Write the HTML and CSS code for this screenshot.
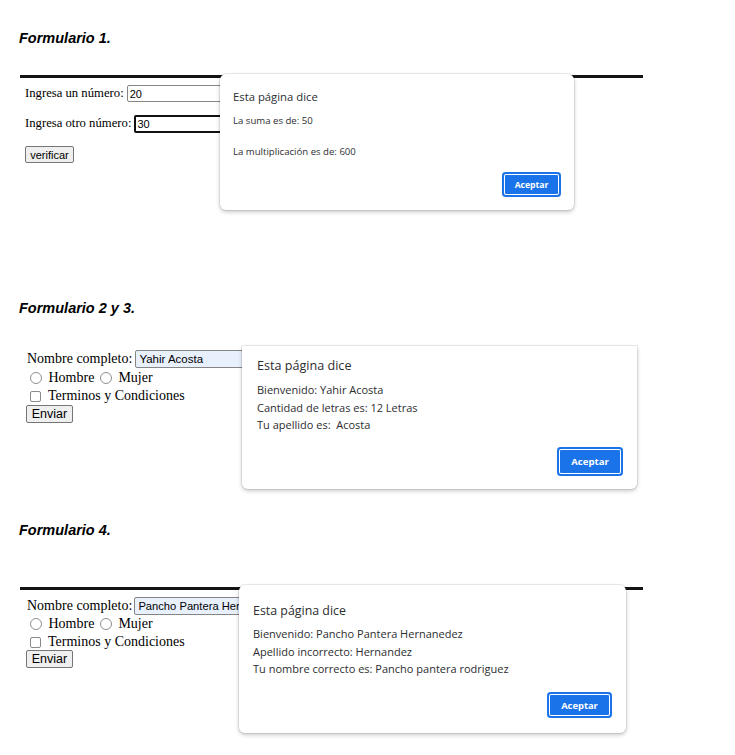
FILE: index.html
```html
<!DOCTYPE html>
<html lang="es">
<head>
<meta charset="utf-8">
<title>Formularios</title>
<link rel="stylesheet" href="styles.css">
</head>
<body>
<main class="doc">
  <section class="sec sec1">
    <h2 class="title">Formulario 1.</h2>
    <div class="shot shot-line shot1">
      <form class="f1">
        <div class="f1-row"><label>Ingresa un número:</label><input class="in1" type="text" value="20"></div>
        <div class="f1-row"><label>Ingresa otro número:</label><input class="in1 in-focus" type="text" value="30"></div>
        <button type="button" class="btn1">verificar</button>
      </form>
      <div class="dialog d1">
        <div class="d-title">Esta página dice</div>
        <div class="d-body">
          <p>La suma es de: 50</p>
          <p>&nbsp;</p>
          <p>La multiplicación es de: 600</p>
        </div>
        <div class="d-actions"><button type="button" class="d-btn">Aceptar</button></div>
      </div>
    </div>
  </section>

  <section class="sec sec2">
    <h2 class="title">Formulario 2 y 3.</h2>
    <div class="shot shot2">
      <form class="f2">
        <div class="f2-row"><label>Nombre completo:</label><input class="in2" type="text" value="Yahir Acosta"></div>
        <div class="f2-row"><input class="radio r1" type="radio" name="g1"><span>Hombre</span><input class="radio r2" type="radio" name="g1"><span>Mujer</span></div>
        <div class="f2-row"><input class="check" type="checkbox"><span>Terminos y Condiciones</span></div>
        <button type="button" class="btn2">Enviar</button>
      </form>
      <div class="dialog d2">
        <div class="d-title">Esta página dice</div>
        <div class="d-body">
          <p>Bienvenido: Yahir Acosta</p>
          <p>Cantidad de letras es: 12 Letras</p>
          <p>Tu apellido es:&nbsp; Acosta</p>
        </div>
        <div class="d-actions"><button type="button" class="d-btn">Aceptar</button></div>
      </div>
    </div>
  </section>

  <section class="sec sec3">
    <h2 class="title">Formulario 4.</h2>
    <div class="shot shot-line shot3">
      <form class="f2 f4">
        <div class="f2-row"><label>Nombre completo:</label><input class="in2 in2b" type="text" value="Pancho Pantera Hernanedez"></div>
        <div class="f2-row"><input class="radio r1" type="radio" name="g2"><span>Hombre</span><input class="radio r2" type="radio" name="g2"><span>Mujer</span></div>
        <div class="f2-row"><input class="check" type="checkbox"><span>Terminos y Condiciones</span></div>
        <button type="button" class="btn2">Enviar</button>
      </form>
      <div class="dialog d3">
        <div class="d-title">Esta página dice</div>
        <div class="d-body">
          <p>Bienvenido: Pancho Pantera Hernanedez</p>
          <p>Apellido incorrecto: Hernandez</p>
          <p>Tu nombre correcto es: Pancho pantera rodriguez</p>
        </div>
        <div class="d-actions"><button type="button" class="d-btn">Aceptar</button></div>
      </div>
    </div>
  </section>
</main>
</body>
</html>
```
FILE: styles.css
```css
* { box-sizing: border-box; }
body { margin: 0; background: #fff; color: #000; }
.doc { width: 735px; }

.title {
  margin: 0 0 0 19px;
  font: italic bold 14.5px/17px "Liberation Sans", Arial, sans-serif;
  color: #000;
}
.sec1 { padding-top: 30px; }
.sec2 { padding-top: 85px; }
.sec3 { padding-top: 31px; }

.shot { position: relative; margin-left: 20px; width: 623px; }
.shot-line { border-top: 3px solid #141414; }
.shot1 { margin-top: 28px; height: 140px; }
.shot2 { margin-top: 29px; height: 145px; }
.shot3 { margin-top: 48px; height: 160px; }

/* Formulario 1 */
.f1 {
  padding: 7px 0 0 5px;
  font: 12.7px "Liberation Serif", "Times New Roman", serif;
  display: flex; flex-direction: column; align-items: flex-start;
}
.f1-row { display: flex; align-items: center; gap: 3px; height: 17px; margin-bottom: 13px; }
.f1-row + .f1-row { margin-bottom: 14px; }
.in1 {
  width: 150px; height: 17px; margin: 0;
  border: 1px solid #858585; border-radius: 2px;
  padding: 0 2px; font: 11px "Liberation Sans", Arial, sans-serif; color: #000; background: #fff;
}
.in-focus { height: 18px; border: 2px solid #111; padding: 0 1px; }
.btn1 {
  width: 49px; height: 17px; padding: 0; margin: 0;
  font: 11px "Liberation Sans", Arial, sans-serif; color: #000;
  background: #efefef; border: 1px solid #767676; border-radius: 2px;
}

/* Formularios 2-4 */
.f2 {
  padding: 4px 0 0 6px;
  font: 14px/18px "Liberation Serif", "Times New Roman", serif;
  display: flex; flex-direction: column; align-items: flex-start;
}
.f2-row { display: flex; align-items: center; height: 18px; }
.f2-row + .f2-row { margin-top: 1px; }
.f2-row + .f2-row + .f2-row { margin-top: 0; }
.f2-row label { margin-left: 1px; }
.f4 { padding-top: 7px; }
.f4 .f2-row + .f2-row { margin-top: 0; }
.f4 .btn2 { margin-top: -1px; }
.in2 {
  width: 150px; height: 18px; margin: 0 0 0 3px;
  border: 1px solid #858585; border-radius: 2px;
  padding: 0 3px; font: 11.5px "Liberation Sans", Arial, sans-serif; color: #000; background: #e8f0fe;
}
.in2b { margin-left: 2px; font-size: 11.2px; }
.radio {
  appearance: none; -webkit-appearance: none;
  width: 12px; height: 12px; margin: 0 6.5px 0 4px;
  border: 1px solid #8f8f8f; border-radius: 50%; background: #fff;
}
.radio.r2 { margin-left: 5.5px; }
.check {
  appearance: none; -webkit-appearance: none;
  width: 11px; height: 11px; margin: 0 7px 0 4px;
  border: 1px solid #8a8a8a; border-radius: 2px; background: #fff;
}
.btn2 {
  width: 47px; height: 18px; padding: 0; margin: 0;
  font: 12.5px "Liberation Sans", Arial, sans-serif; color: #000;
  background: #efefef; border: 1px solid #767676; border-radius: 2px;
}

/* Dialogs */
.dialog {
  position: absolute;
  background: #fff;
  border-radius: 6px;
  box-shadow: 0 0 0 1px rgba(0,0,0,0.07), 0 2px 4px rgba(0,0,0,0.22);
  font-family: "Open Sans", "Noto Sans", sans-serif;
  color: #2d2e30;
  display: flex; flex-direction: column;
}
.d-body p { margin: 0; white-space: nowrap; }
.d-actions { display: flex; justify-content: flex-end; }
.d-btn {
  margin: 0; padding: 0;
  border: none; border-radius: 4px;
  background: #1a73e8; color: #fff;
  font-family: "Open Sans", "Noto Sans", sans-serif; font-weight: 700;
  box-shadow: inset 0 0 0 2px #1a73e8, inset 0 0 0 3px #fff;
}

.d1 { left: 200px; top: -4px; width: 354px; padding: 16px 13px 13px 13px; }
.d1 .d-title { font-size: 11.3px; line-height: 14px; }
.d1 .d-body { margin-top: 8.5px; font-size: 9.6px; line-height: 15.5px; }
.d1 .d-actions { margin-top: 13px; }
.d1 .d-btn { width: 59px; height: 25px; font-size: 8.6px; }

.d2 { left: 222px; top: 0; width: 395px; padding: 11.5px 14px 13px 15px; border-radius: 0 0 6px 6px; }
.d2 .d-title { font-size: 12.6px; line-height: 16px; }
.d2 .d-body { margin-top: 7.5px; font-size: 11px; line-height: 17.5px; }
.d2 .d-actions { margin-top: 13.5px; }
.d2 .d-btn { width: 66px; height: 29px; font-size: 9.6px; }

.d3 { left: 219px; top: -5px; width: 387px; padding: 18px 14px 15px 14px; }
.d3 .d-title { font-size: 12.4px; line-height: 16px; }
.d3 .d-body { margin-top: 6px; font-size: 11px; line-height: 17.5px; }
.d3 .d-actions { margin-top: 14.5px; }
.d3 .d-btn { width: 65px; height: 26px; font-size: 9.4px; }
```
